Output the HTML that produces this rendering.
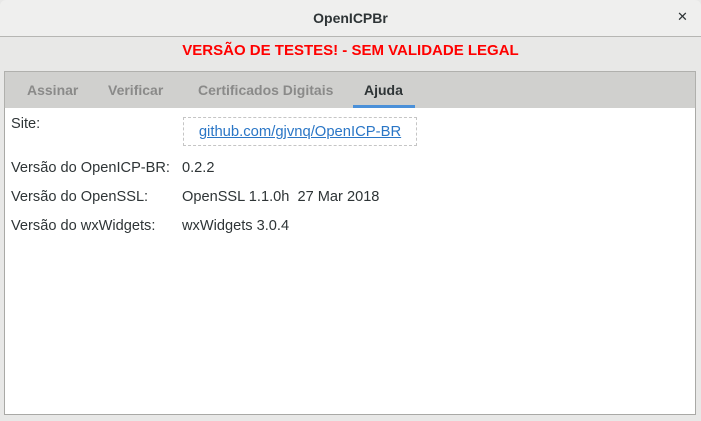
<!DOCTYPE html>
<html><head><meta charset="utf-8"><style>
*{margin:0;padding:0;box-sizing:border-box}
body{width:701px;height:421px;background:#e8e8e7;font-family:"Liberation Sans","DejaVu Sans",sans-serif;font-size:14px;color:#2e3436;position:relative;overflow:hidden}
.title{position:absolute;left:0;top:0;width:701px;height:37px;background:#efefee;border-bottom:1px solid #b6b6b3;border-radius:6px 6px 0 0}
.title span{position:absolute;left:0;width:701px;top:10px;text-align:center;font-weight:bold;font-size:14px;color:#2e3436}
.close{position:absolute;left:677px;top:9px;font-size:13px;font-weight:bold;color:#2e3436}
.warn{position:absolute;left:0;width:701px;top:42px;text-align:center;color:#f00;font-weight:bold;font-size:15px}
.tabs{position:absolute;left:4px;top:71px;width:692px;height:38px;background:#d0d0ce;border:1px solid #b0b0ad;border-bottom:1px solid #b0b0ad}
.tab{position:absolute;top:10px;color:#8a8a89;font-weight:bold;font-size:14px}
.active{color:#2e3436}
.ul{position:absolute;left:348px;top:33px;width:62px;height:3px;background:#4a90d9}
.panel{position:absolute;left:4px;top:108px;width:692px;height:307px;background:#fff;border:1px solid #a9a9a6;border-top:none}
.t{position:absolute;font-size:14.6px;color:#2e3436;white-space:nowrap}
.link{position:absolute;left:183px;top:117px;width:234px;height:29px;border:1px dashed #c5c5c5;color:#2a76c6;text-decoration:underline;text-align:center;line-height:28px;font-size:14.8px}
</style></head><body>
<div class="title"><span>OpenICPBr</span><div class="close">✕</div></div>
<div class="warn">VERSÃO DE TESTES! - SEM VALIDADE LEGAL</div>
<div class="tabs">
<div class="tab" style="left:22px">Assinar</div>
<div class="tab" style="left:103px">Verificar</div>
<div class="tab" style="left:193px">Certificados Digitais</div>
<div class="tab active" style="left:359px">Ajuda</div>
<div class="ul"></div>
</div>
<div class="panel"></div>
<div class="t" style="left:11px;top:116px">Site:</div>
<div class="link">github.com/gjvnq/OpenICP-BR</div>
<div class="t" style="left:11px;top:160px">Versão do OpenICP-BR:</div>
<div class="t" style="left:182px;top:160px">0.2.2</div>
<div class="t" style="left:11px;top:189px">Versão do OpenSSL:</div>
<div class="t" style="left:182px;top:189px">OpenSSL 1.1.0h&nbsp; 27 Mar 2018</div>
<div class="t" style="left:11px;top:218px">Versão do wxWidgets:</div>
<div class="t" style="left:182px;top:218px">wxWidgets 3.0.4</div>
</body></html>
